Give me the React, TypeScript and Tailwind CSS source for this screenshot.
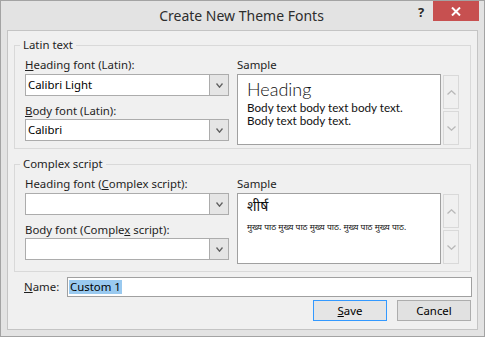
const Chevron = ({ up = false, color, w = 8, h = 5 }: { up?: boolean; color: string; w?: number; h?: number }) => (
  <svg width={w} height={h} viewBox={`0 0 ${w} ${h}`}>
    <path
      d={up ? `M0.5 ${h - 0.5} L${w / 2} 0.8 L${w - 0.5} ${h - 0.5}` : `M0.5 0.5 L${w / 2} ${h - 0.8} L${w - 0.5} 0.5`}
      stroke={color}
      strokeWidth="1.3"
      fill="none"
    />
  </svg>
);

const Combo = ({ value }: { value?: string }) => (
  <div className="flex h-[22px] border border-[#acacac] bg-white">
    <div className="flex-1 pl-[2px] leading-[20px] text-black">{value}</div>
    <div className="flex w-[19px] items-center justify-center border-l border-[#acacac] bg-[#e5e5e5]">
      <Chevron color="#606060" w={7} h={5} />
    </div>
  </div>
);

const ScrollButtons = () => (
  <div className="ml-[2px] mt-[1px] flex w-[16px] flex-col gap-[2px]">
    <div className="flex h-[34px] items-center justify-center border border-[#d9d9d9] bg-[#f0f0f0]">
      <Chevron up color="#b8b8b8" w={9} h={5} />
    </div>
    <div className="flex h-[34px] items-center justify-center border border-[#d9d9d9] bg-[#f0f0f0]">
      <Chevron color="#b8b8b8" w={9} h={5} />
    </div>
  </div>
);

const Label = ({ children, className = "" }: { children: React.ReactNode; className?: string }) => (
  <div className={`leading-[15px] text-[#1e1e1e] ${className}`}>{children}</div>
);

export default function App() {
  return (
    <div className="flex h-[337px] w-[485px] flex-col border border-[#a3a3a3] bg-[#e3e3e3] font-['Noto_Sans',sans-serif] text-[11.4px] text-[#1e1e1e]">
      {/* Title bar */}
      <div className="flex h-[29px] items-start">
        <div className="w-[73px]" />
        <div className="flex-1 text-center text-[14px] leading-[29px] text-[#2d2d2d]">Create New Theme Fonts</div>
        <div className="flex w-[75px] items-start">
          <div className="mt-[2px] w-[24px] text-center text-[13px] font-bold leading-[18px] text-[#2a2a2a]">?</div>
          <div className="flex h-[20px] w-[46px] items-center justify-center bg-[#c75050]">
            <svg width="10" height="9" viewBox="0 0 10 9">
              <path d="M1 0.5 L9 8.5 M9 0.5 L1 8.5" stroke="white" strokeWidth="2" />
            </svg>
          </div>
        </div>
      </div>

      {/* Content */}
      <div className="mx-[6px] flex h-[300px] flex-col border border-[#c4c4c4] bg-[#f0f0f0]">
        {/* Latin text */}
        <fieldset className="mx-[6px] mt-[6px] border border-[#d9d9d9]">
          <legend className="ml-[5px] px-[3px] leading-[16px]">Latin text</legend>
          <div className="flex gap-[8px] pb-[3px] pl-[10px] pr-[11px] pt-[4px]">
            <div className="flex w-[204px] flex-col">
              <Label>
                <span className="underline">H</span>eading font (Latin):
              </Label>
              <div className="mt-[2px]">
                <Combo value="Calibri Light" />
              </div>
              <Label className="mt-[7px]">
                <span className="underline">B</span>ody font (Latin):
              </Label>
              <div className="mt-[1px]">
                <Combo value="Calibri" />
              </div>
            </div>
            <div className="flex flex-col">
              <Label>Sample</Label>
              <div className="mt-[2px] flex">
                <div className="h-[71px] w-[204px] border border-[#a0a0a0] bg-white pl-[9px] pt-[3px] font-['Lato',sans-serif] text-[#111]">
                  <div className="text-[18px] font-light leading-[22px]">Heading</div>
                  <div className="mt-[1px] text-[11.7px] leading-[13px]">Body text body text body text.</div>
                  <div className="text-[11.7px] leading-[13px]">Body text body text.</div>
                </div>
                <ScrollButtons />
              </div>
            </div>
          </div>
        </fieldset>

        {/* Complex script */}
        <fieldset className="mx-[6px] mt-[7px] border border-[#d9d9d9]">
          <legend className="ml-[5px] px-[3px] leading-[16px]">Complex script</legend>
          <div className="flex gap-[8px] pb-[7px] pl-[10px] pr-[11px] pt-[4px]">
            <div className="flex w-[204px] flex-col">
              <Label>
                Heading font (<span className="underline">C</span>omplex script):
              </Label>
              <div className="mt-[2px]">
                <Combo />
              </div>
              <Label className="mt-[7px]">
                Body font (Comple<span className="underline">x</span> script):
              </Label>
              <div className="mt-[1px]">
                <Combo />
              </div>
            </div>
            <div className="flex flex-col">
              <Label>Sample</Label>
              <div className="mt-[2px] flex">
                <div className="h-[71px] w-[204px] border border-[#a0a0a0] bg-white pl-[9px] pt-[4px] font-['Noto_Sans_Devanagari','Noto_Sans',sans-serif] text-[#111]">
                  <div className="text-[14px] leading-[20px]">शीर्ष</div>
                  <div className="mt-[4px] whitespace-nowrap text-[8.5px] leading-[12px]">
                    मुख्य पाठ मुख्य पाठ मुख्य पाठ. मुख्य पाठ मुख्य पाठ.
                  </div>
                </div>
                <ScrollButtons />
              </div>
            </div>
          </div>
        </fieldset>

        {/* Name */}
        <div className="mt-[5px] flex h-[20px] items-center pl-[16px] pr-[5px]">
          <div className="w-[43px]">
            <span className="underline">N</span>ame:
          </div>
          <div className="flex h-[20px] flex-1 items-center border border-[#a0a0a0] bg-white pl-[1px]">
            <span className="bg-[#99c9ef] px-[1px] leading-[14px] text-black">Custom 1</span>
          </div>
        </div>

        {/* Buttons */}
        <div className="mt-[3px] flex justify-end gap-[10px] pr-[6px]">
          <div className="flex h-[21px] w-[74px] items-center justify-center border border-[#3399ff] bg-[#e5e5e5] text-black">
            <span>
              <span className="underline">S</span>ave
            </span>
          </div>
          <div className="flex h-[21px] w-[74px] items-center justify-center border border-[#adadad] bg-[#e1e1e1] text-black">
            Cancel
          </div>
        </div>
      </div>
    </div>
  );
}
